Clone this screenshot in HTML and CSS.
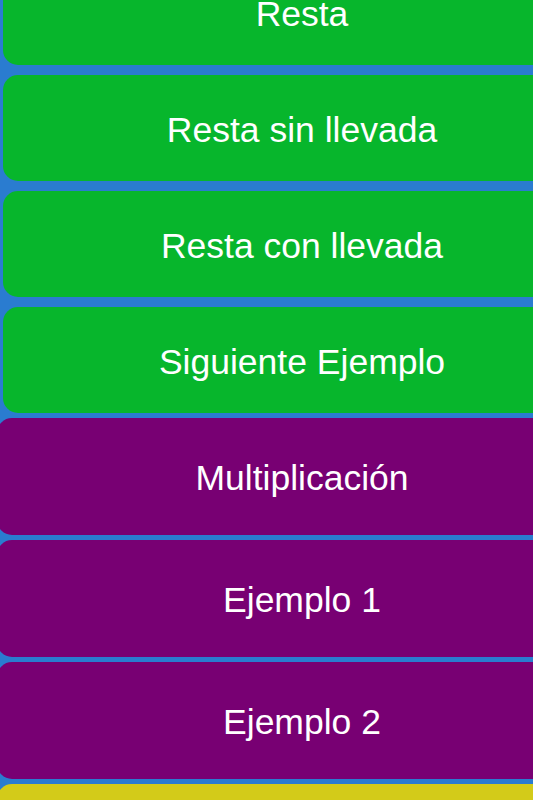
FILE: index.html
```html
<!DOCTYPE html>
<html lang="es">
<head>
<meta charset="utf-8">
<title>Menú</title>
<link rel="stylesheet" href="styles.css">
</head>
<body>
<div class="menu">
  <div class="btn green">Resta</div>
  <div class="btn green">Resta sin llevada</div>
  <div class="btn green">Resta con llevada</div>
  <div class="btn green">Siguiente Ejemplo</div>
  <div class="btn purple">Multiplicación</div>
  <div class="btn purple">Ejemplo 1</div>
  <div class="btn purple">Ejemplo 2</div>
  <div class="btn yellow"></div>
</div>
</body>
</html>
```
FILE: styles.css
```css
html, body {
  margin: 0;
  padding: 0;
  background: #2a7cd0;
  overflow: hidden;
  width: 533px;
  height: 800px;
}
.menu {
  display: flex;
  flex-direction: column;
  padding-left: 3px;
  margin-top: -41px;
}
.btn {
  flex: none;
  display: flex;
  align-items: center;
  justify-content: center;
  box-sizing: border-box;
  padding-top: 4px;
  color: #ffffff;
  font-family: "Liberation Sans", Arial, sans-serif;
  font-size: 35.5px;
  border-radius: 15px;
}
.green {
  width: 598px;
  height: 106px;
  margin-bottom: 10px;
  background: #07b62c;
}
.green:nth-child(4) {
  margin-bottom: 5px;
}
.purple {
  width: 610px;
  height: 117px;
  margin-left: -6px;
  margin-bottom: 5px;
  background: #780073;
}
.yellow {
  width: 610px;
  height: 117px;
  margin-left: -6px;
  background: #d3cb19;
}
```
